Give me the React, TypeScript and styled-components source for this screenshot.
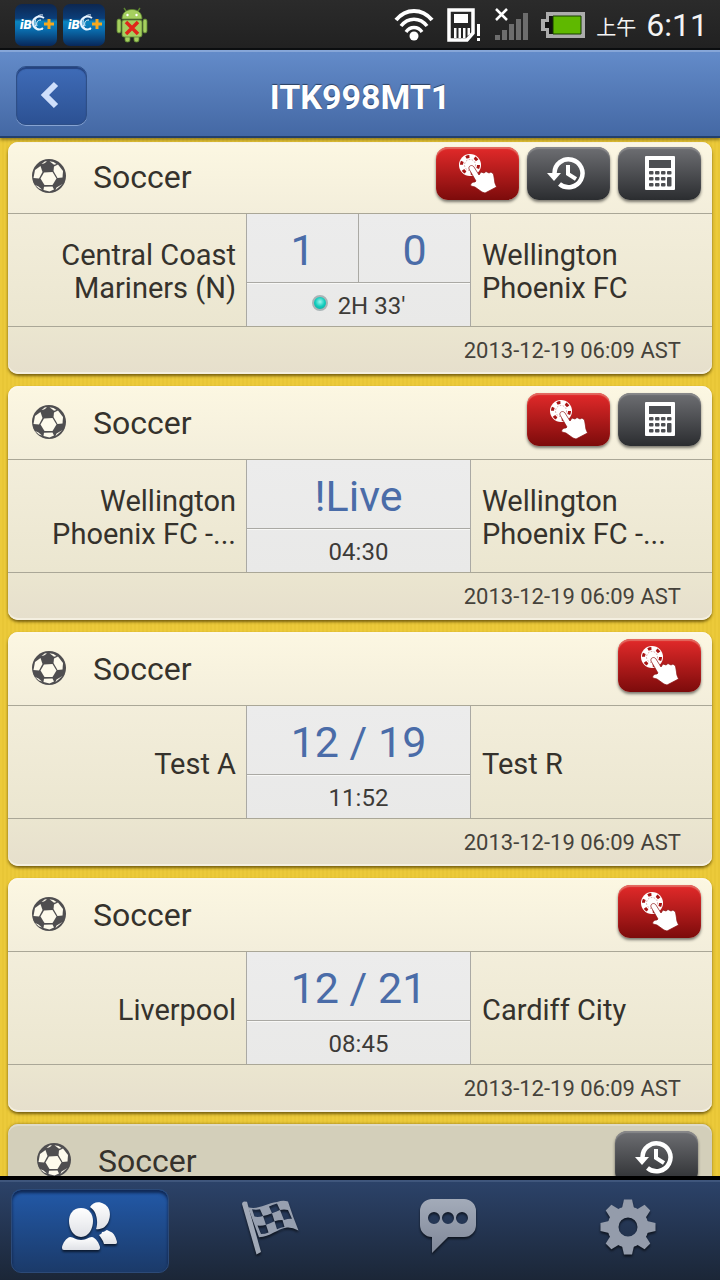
import React from 'react';
import styled, { createGlobalStyle, css } from 'styled-components';

const GlobalStyle = createGlobalStyle`
  * { box-sizing: border-box; }
  body {
    margin: 0;
    background: #e9c735;
    font-family: Roboto, "Noto Sans CJK TC", sans-serif;
    color: #35322c;
  }
  button { font: inherit; padding: 0; cursor: pointer; }
`;

const Screen = styled.div`
  display: flex;
  flex-direction: column;
  height: 100vh;
  overflow: hidden;
`;

const StatusBar = styled.div`
  flex: none;
  display: flex;
  align-items: center;
  justify-content: space-between;
  height: 50px;
  padding: 2px 12px 0 15px;
  background: linear-gradient(#2b2b2b, #212121);
  border-bottom: 2px solid #0c0e10;
  color: #f4f4f4;
`;

const StatusGroup = styled.div`
  display: flex;
  align-items: center;
  gap: 6px;
`;

const StatusIcons = styled(StatusGroup)`
  gap: 13px;
`;

const TimeGroup = styled(StatusGroup)`
  gap: 10px;
  margin-left: -2px;
`;

const Meridiem = styled.span`
  font-family: "Noto Sans CJK TC", sans-serif;
  font-weight: 400;
  font-size: 20px;
  line-height: 24px;
  padding-top: 4px;
`;

const Clock = styled.span`
  font-size: 32px;
  line-height: 40px;
`;

const TitleBar = styled.header`
  position: relative;
  z-index: 1;
  flex: none;
  display: grid;
  grid-template-columns: 71px 1fr 71px;
  align-items: center;
  height: 88px;
  padding: 2px 16px 0;
  background: linear-gradient(#638bc9, #4468a4);
  border-top: 2px solid #86a6d8;
  border-bottom: 2px solid #23406c;
  box-shadow: 0 2px 3px rgba(60, 50, 0, 0.5);
`;

const Title = styled.h1`
  margin: 0;
  padding-top: 4px;
  text-align: center;
  font-size: 34px;
  line-height: 40px;
  font-weight: 700;
  color: #fff;
  text-shadow: 0 -1px 1px rgba(0, 0, 0, 0.5);
`;

const BackButton = styled.button`
  display: flex;
  align-items: center;
  justify-content: center;
  height: 59px;
  padding-right: 4px;
  border: 1px solid #2e4f87;
  border-radius: 10px;
  background: linear-gradient(#3f6cb8, #2c5193);
  box-shadow: inset 0 2px 1px rgba(20, 40, 90, 0.6), 0 1px 0 #86a3d3;
`;

const List = styled.main`
  flex: 1;
  min-height: 0;
  overflow: hidden;
  display: flex;
  flex-direction: column;
  gap: 12px;
  padding: 4px 8px 0;
  background: repeating-linear-gradient(90deg, #ecca3a 0 2px, #e8c636 2px 4px);
`;

const CardHead = styled.div`
  display: flex;
  align-items: flex-end;
  height: 74px;
  padding: 0 11px 13px 23px;
  border-bottom: 1px solid #aaa797;
`;

const Card = styled.article<{ $pressed?: boolean }>`
  flex: none;
  border-radius: 10px;
  background: linear-gradient(#fcf7e2, #f3eedb 31%, #ebe6d0 79%, #e6dfcc);
  box-shadow: inset 0 2px 0 #fdf8e8, inset 0 -2px 0 #f4efe0, 0 2px 3px rgba(80, 60, 0, 0.75);
  &:first-child ${CardHead} { height: 72px; }
  ${(p) =>
    p.$pressed &&
    css`
      background: #d3cfba;
      box-shadow: inset 0 2px 0 #dfdbc9, 0 0 3px rgba(80, 60, 0, 0.6);
      ${CardHead} { padding-left: 28px; padding-right: 14px; }
    `}
`;

const Sport = styled.h2`
  flex: 1;
  margin: 0 0 0 26px;
  font-size: 32px;
  line-height: 46px;
  font-weight: 400;
`;

const BallSlot = styled.span`
  display: flex;
  align-items: center;
  height: 48px;
`;

const Actions = styled.div`
  display: flex;
  gap: 8px;
`;

const ActionButton = styled.button<{ $red?: boolean }>`
  display: flex;
  align-items: center;
  justify-content: center;
  width: 83px;
  height: 53px;
  padding-bottom: 2px;
  border: 0;
  border-radius: 12px;
  background: ${(p) =>
    p.$red ? 'linear-gradient(#e32a2a, #7c0b0b)' : 'linear-gradient(#6e6f73, #2b2d30)'};
  box-shadow: inset 0 2px 1px ${(p) => (p.$red ? '#e36a60' : '#88888a')},
    0 2px 3px rgba(0, 0, 0, 0.5);
`;

const Match = styled.div`
  display: grid;
  grid-template-columns: minmax(0, 238fr) 225px minmax(0, 241fr);
  height: 113px;
  border-bottom: 1px solid #aaa797;
`;

const Team = styled.div<{ $home?: boolean }>`
  display: flex;
  align-items: center;
  justify-content: ${(p) => (p.$home ? 'flex-end' : 'flex-start')};
  padding: 4px 10px 0 11px;
  text-align: ${(p) => (p.$home ? 'right' : 'left')};
  font-size: 29px;
  line-height: 33px;
  white-space: pre-line;
`;

const Center = styled.div`
  display: flex;
  flex-direction: column;
  border: solid #aaa9a4;
  border-width: 0 1px;
  background: linear-gradient(#ececec, #e9e9e8);
`;

const Scores = styled.div`
  display: flex;
  height: 69px;
  border-bottom: 1px solid #aaa9a4;
  box-shadow: 0 1px 0 #f8f8f6;
`;

const Score = styled.span`
  flex: 1;
  text-align: center;
  font-size: 43px;
  line-height: 72px;
  color: #4a6ca8;
  & + & { border-left: 1px solid #aaa9a4; }
`;

const Time = styled.div`
  flex: 1;
  display: flex;
  align-items: center;
  justify-content: center;
  gap: 10px;
  padding-top: 2px;
  font-size: 24px;
  line-height: 28px;
  color: #3d3b38;
`;

const LiveDot = styled.span`
  width: 16px;
  height: 16px;
  margin-bottom: 6px;
  border: 2px solid #a9b4b6;
  border-radius: 50%;
  background: radial-gradient(circle at 50% 40%, #9ff6ee, #12cdbd 50%, #0b9d96);
`;

const Stamp = styled.footer`
  height: 47px;
  padding-right: 31px;
  text-align: right;
  font-size: 22px;
  line-height: 47px;
  color: #45423b;
`;

const TabBar = styled.nav`
  position: relative;
  z-index: 1;
  flex: none;
  display: flex;
  height: 104px;
  padding-right: 4px;
  border-top: 4px solid #000;
  background: linear-gradient(#2c436a, #1b2637);
  box-shadow: inset 0 2px 0 #3f567c;
`;

const Tab = styled.button<{ $active?: boolean }>`
  flex: 1;
  display: flex;
  align-items: flex-start;
  justify-content: center;
  margin: 9px 10px 7px 11px;
  padding-top: 9px;
  border: 1px solid transparent;
  border-radius: 10px;
  background: transparent;
  ${(p) =>
    p.$active &&
    css`
      border-color: #2c4a78;
      background: linear-gradient(#2259a8, #1b3a69);
      box-shadow: inset 0 3px 3px rgba(8, 20, 50, 0.7);
    `}
  svg { filter: drop-shadow(0 2px 1px rgba(0, 0, 0, 0.6)); overflow: visible; }
`;

const AppBadge = () => (
  <svg width="42" height="42" viewBox="0 0 42 42" aria-label="iBC+">
    <defs>
      <linearGradient id="badge" x1="0" y1="0" x2="0" y2="1">
        <stop offset="0" stopColor="#0d2750" />
        <stop offset="0.34" stopColor="#0b3d78" />
        <stop offset="0.42" stopColor="#0a86c0" />
        <stop offset="0.6" stopColor="#0a6fb0" />
        <stop offset="1" stopColor="#08275a" />
      </linearGradient>
    </defs>
    <rect width="42" height="42" rx="7" fill="url(#badge)" />
    <text x="5" y="25" fontFamily="Roboto" fontSize="13" fontWeight="900" fontStyle="italic" fill="#fff">iB</text>
    <g fill="none" stroke="#e8f4ff">
      <path d="M29 14c-6-4-12 1-11 6s6 7 10 4" strokeWidth="2" />
      <path d="M28 11c-5-1-8 3-8 8s4 8 8 6M26 16c-4 0-5 3-4 6" strokeWidth="1" />
    </g>
    <path d="M34 15v10M29 20h10" stroke="#f6a81c" strokeWidth="3" />
  </svg>
);

const Robot = () => (
  <svg width="42" height="36" viewBox="-5 0 42 36">
    <g fill="#a5cf5f" stroke="#5c8430" strokeWidth="0.8">
      <path d="M10 4 8 1M22 4l2-3" strokeWidth="1.4" />
      <path d="M6 12c0-6 4-9.500 10-9.500S26 6 26 12z" />
      <rect x="1" y="12" width="4" height="14" rx="2" />
      <rect x="27" y="12" width="4" height="14" rx="2" />
      <rect x="9" y="28" width="5" height="7" rx="2" />
      <rect x="18" y="28" width="5" height="7" rx="2" />
      <rect x="6" y="13" width="20" height="17" rx="2" />
    </g>
    <circle cx="11.500" cy="8" r="1.200" fill="#fff" />
    <circle cx="20.500" cy="8" r="1.200" fill="#fff" />
    <path d="m10 15 12 12m0-12L10 27" stroke="#e0261b" strokeWidth="3.500" />
  </svg>
);

const Wifi = () => (
  <svg width="40" height="34" viewBox="0 0 40 34" fill="none" stroke="#fff" strokeWidth="4">
    <path d="M2 12c10-12 26-12 36 0" />
    <path d="M7 18c7-9 19-9 26 0" strokeWidth="3.600" />
    <path d="M12 24c4-6 12-6 16 0" strokeWidth="3.400" />
    <circle cx="20" cy="28" r="4.500" fill="#fff" stroke="none" />
  </svg>
);

const SimAlert = () => (
  <svg width="34" height="34" viewBox="0 0 34 34">
    <path d="M2 2h24v23l-6 7H2z" fill="none" stroke="#fff" strokeWidth="3.500" />
    <path d="M7 6h14v9H7zM7 20h2.500v10H7zM11.500 20h2.500v10h-2.500zM16 20h2.500v10H16zM20.500 20H23v6l-2.500 2z" fill="#fff" />
    <path d="M30 16h3v12h-3zM30 30h3v3h-3z" fill="#fff" />
  </svg>
);

const NoSignal = () => (
  <svg width="34" height="34" viewBox="0 0 34 34">
    <path d="M1 27h5v5H1zM8 22h5v10H8zM15 16h5v16h-5zM22 11h5v21h-5zM29 5h5v27h-5z" fill="#6d6d6d" />
    <path d="m2 1 11 11M13 1 2 12" stroke="#fff" strokeWidth="2.500" />
  </svg>
);

const Battery = () => (
  <svg width="44" height="26" viewBox="0 0 44 26">
    <path d="M5 0h39v26H5v-7H0V7h5z" fill="#acacac" />
    <path d="M8 4h32v18H8v-6H4v-6h4z" fill="#111" />
    <path d="M12 4h28v18H12z" fill="#5fb800" stroke="#173a00" />
  </svg>
);

const Ball = () => (
  <svg width="36" height="36" viewBox="0 0 36 36">
    <circle cx="18" cy="18" r="17" fill="#4f4e50" />
    <g fill="#fdfaec">
      <path d="m13 14.500 8.500-.5 4 6.500-4 6.500h-8l-4-6.500z" />
      <path d="M23 8.500 27 6.500l5 6.500-.5 6.500-5 .5-4-7z" />
      <path d="m4 12 5.500-4 2 6-3.500 6.500-5.500-.5z" />
      <path d="m13 28.800 8.500-.3 1.500 3-4.500 2-6-1.500z" />
      <path d="M10.500 6 14 3.300 16 3.500 13 5.500z" />
      <path d="m18.500 3.300 4 .7 3 2-2.500.8z" />
      <path d="m4 27 3.500 1.500 3.500 3-3-1z" />
      <path d="m31.500 26-4 3.500-3 2.500 1-2.500z" />
    </g>
  </svg>
);

const ChipHand = () => (
  <svg width="42" height="42" viewBox="0 0 42 42">
    <circle cx="13" cy="13" r="11" fill="#fff" />
    <circle cx="13" cy="13" r="8.500" fill="none" stroke="#a81414" strokeWidth="3" strokeDasharray="3.600 5.300" />
    <circle cx="13" cy="13" r="5.500" fill="#fff" stroke="#c88" strokeWidth="0.800" strokeDasharray="1.500 1.500" />
    <path d="M12 17c-1-3 3-5 5-2l5 8 2-3 3 1 2-1.500 3 1.500 2-1 2.500 2 1 6c0 4 2 6 2 7L28 41l-3-1-7-5-4-1c-1-2 1-4 4-4l1-1z" fill="#fff" stroke="#8c1010" strokeWidth="0.700" />
  </svg>
);

const History = () => (
  <svg width="44" height="34" viewBox="0 0 44 34" fill="none" stroke="#fff">
    <path d="M7.500 17A14 14 0 1 1 12.500 28" strokeWidth="4.500" />
    <path d="M0 17h14l-7 8z" fill="#fff" stroke="none" />
    <path d="M21 9v9l8 5" strokeWidth="4" />
  </svg>
);

const Calculator = () => (
  <svg width="30" height="34" viewBox="0 0 30 34">
    <rect width="30" height="34" rx="1" fill="#fff" />
    <g fill="#4c4e52">
      <rect x="4" y="4" width="22" height="8" />
      {[15, 21, 27].map((y) =>
        [4, 10, 16].map((x) => <rect key={`${x}-${y}`} x={x} y={y} width="4.500" height="3.500" rx="1" />),
      )}
      <rect x="22" y="15" width="4.500" height="3.500" rx="1" />
      <rect x="22" y="21" width="4.500" height="9.500" rx="1" />
    </g>
  </svg>
);

const SilverDefs = () => (
  <defs>
    <linearGradient id="silver" x1="0" y1="0" x2="0" y2="1">
      <stop offset="0" stopColor="#a3abb9" />
      <stop offset="1" stopColor="#7f8798" />
    </linearGradient>
    <linearGradient id="white" x1="0" y1="0" x2="0" y2="1">
      <stop offset="0" stopColor="#ffffff" />
      <stop offset="1" stopColor="#dfe1e6" />
    </linearGradient>
  </defs>
);

const People = () => (
  <svg width="56" height="56" viewBox="0 0 56 56" fill="url(#white)">
    <SilverDefs />
    <path d="M28 8c3-5 9-6 14-3 6 3 7 10 5 16-2 7-8 10-13 9 2-5 2-17-6-22z" />
    <path d="M40 33c3 0 4-2 5-2l4 2c3 1 5 6 6 10 0 2-1 2-3 2H42c-1-4-3-6-5-9 1-1 3-1 3-3z" />
    <path d="M19 9c8 0 12 6 12 13 0 7-4 16-12 16S7 29 7 22 11 9 19 9z" />
    <path d="M8 38c4 0 5 3 11 3s7-3 11-3c4 1 7 6 8 10 0 3-1 3-3 3H3c-2 0-3 0-3-3 1-4 4-9 8-10z" />
  </svg>
);

const Flag = () => (
  <svg width="56" height="56" viewBox="0 0 56 56">
    <path
      fillRule="evenodd"
      d="M7 8.300C18 11 26 4 36 3Q42 1 47 2.500 52 18 57.500 31.500 51 28 46 28.500C36 30 29 38 18 38.300z
        M11 10.300 13.500 17.500Q17 18.500 22 17L19 10.300Q15 11 11 10.300z
        M28 7.500 31 14.300Q35 13 39 11L36 4.500Q32 5.500 28 7.500z
        M22 17 25 25.700Q29 24.500 33.500 22.300L31 14.300Q26 16.500 22 17z
        M39 11 43 21Q47 19.500 51 19.700L47 11Q43 10 39 11z
        M33.500 22.300 36 30.300Q40 28.500 43.500 28L41.500 21Q37 21 33.500 22.300z
        M16.500 26.500 20 35Q24 35 27.500 33.500L25 25.700Q21 27 16.500 26.500z"
      fill="#97a0b0"
    />
    <path d="M1 5q0-2 2-2.500l3 .3L20 53l-4.500 2.500z" fill="#a1a9b7" />
  </svg>
);

const Chat = () => (
  <svg width="58" height="56" viewBox="0 0 58 56">
    <path
      fillRule="evenodd"
      d="M12 0h33a12 12 0 0 1 12 12v14a12 12 0 0 1-12 12H29L13 54V38a12 12 0 0 1-12-12V12A12 12 0 0 1 12 0zM15 13a6 6 0 1 0 0 12 6 6 0 0 0 0-12zm14 0a6 6 0 1 0 0 12 6 6 0 0 0 0-12zm14 0a6 6 0 1 0 0 12 6 6 0 0 0 0-12z"
      fill="url(#silver)"
    />
  </svg>
);

const Gear = () => (
  <svg width="56" height="56" viewBox="-29 -28 56 56">
    <g fill="#949cab">
      {[0, 45, 90, 135, 180, 225, 270, 315].map((a) => (
        <path key={a} d="M-4-27.500H4l2 8.500H-6z" transform={`rotate(${a})`} />
      ))}
    </g>
    <circle r="15" fill="none" stroke="#949cab" strokeWidth="11" />
  </svg>
);

type Action = 'bet' | 'history' | 'calc';

const actionParts: Record<Action, { label: string; icon: React.ReactNode }> = {
  bet: { label: 'Place bet', icon: <ChipHand /> },
  history: { label: 'History', icon: <History /> },
  calc: { label: 'Calculator', icon: <Calculator /> },
};

interface MatchData {
  actions: Action[];
  home?: string;
  away?: string;
  scores?: string[];
  time?: string;
  live?: boolean;
  pressed?: boolean;
}

const matches: MatchData[] = [
  {
    actions: ['bet', 'history', 'calc'],
    home: 'Central Coast\nMariners (N)',
    away: 'Wellington\nPhoenix FC',
    scores: ['1', '0'],
    time: "2H 33'",
    live: true,
  },
  {
    actions: ['bet', 'calc'],
    home: 'Wellington\nPhoenix FC -...',
    away: 'Wellington\nPhoenix FC -...',
    scores: ['!Live'],
    time: '04:30',
  },
  { actions: ['bet'], home: 'Test A', away: 'Test R', scores: ['12 / 19'], time: '11:52' },
  { actions: ['bet'], home: 'Liverpool', away: 'Cardiff City', scores: ['12 / 21'], time: '08:45' },
  { actions: ['history'], pressed: true },
];

const MatchCard = ({ match }: { match: MatchData }) => (
  <Card $pressed={match.pressed}>
    <CardHead>
      <BallSlot><Ball /></BallSlot>
      <Sport>Soccer</Sport>
      <Actions>
        {match.actions.map((a) => (
          <ActionButton key={a} $red={a === 'bet'} aria-label={actionParts[a].label}>
            {actionParts[a].icon}
          </ActionButton>
        ))}
      </Actions>
    </CardHead>
    {match.scores && (
      <>
        <Match>
          <Team $home>{match.home}</Team>
          <Center>
            <Scores>
              {match.scores.map((s) => (
                <Score key={s}>{s}</Score>
              ))}
            </Scores>
            <Time>
              {match.live && <LiveDot />}
              {match.time}
            </Time>
          </Center>
          <Team>{match.away}</Team>
        </Match>
        <Stamp>2013-12-19 06:09 AST</Stamp>
      </>
    )}
  </Card>
);

export default function App() {
  return (
    <>
      <GlobalStyle />
      <Screen>
        <StatusBar>
          <StatusGroup>
            <AppBadge />
            <AppBadge />
            <Robot />
          </StatusGroup>
          <StatusIcons>
            <Wifi />
            <SimAlert />
            <NoSignal />
            <Battery />
            <TimeGroup>
              <Meridiem>上午</Meridiem>
              <Clock>6:11</Clock>
            </TimeGroup>
          </StatusIcons>
        </StatusBar>
        <TitleBar>
          <BackButton aria-label="Back">
            <svg width="20" height="28" viewBox="0 0 20 28" fill="none" stroke="#cfdffb" strokeWidth="6">
              <path d="M16 3 5 14l11 11" />
            </svg>
          </BackButton>
          <Title>ITK998MT1</Title>
        </TitleBar>
        <List>
          {matches.map((m, i) => (
            <MatchCard key={i} match={m} />
          ))}
        </List>
        <TabBar>
          <Tab $active aria-label="Members"><People /></Tab>
          <Tab aria-label="Races"><Flag /></Tab>
          <Tab aria-label="Messages"><Chat /></Tab>
          <Tab aria-label="Settings"><Gear /></Tab>
        </TabBar>
      </Screen>
    </>
  );
}
